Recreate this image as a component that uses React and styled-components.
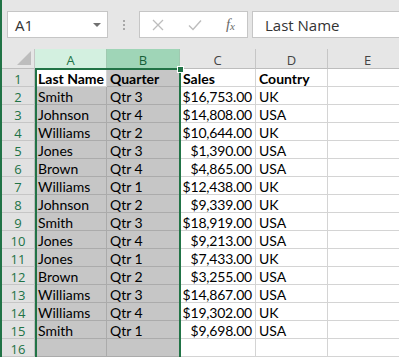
import styled, { createGlobalStyle } from "styled-components";

const rows = [
  ["Last Name", "Quarter", "Sales", "Country"],
  ["Smith", "Qtr 3", "$16,753.00", "UK"],
  ["Johnson", "Qtr 4", "$14,808.00", "USA"],
  ["Williams", "Qtr 2", "$10,644.00", "UK"],
  ["Jones", "Qtr 3", "$1,390.00", "USA"],
  ["Brown", "Qtr 4", "$4,865.00", "USA"],
  ["Williams", "Qtr 1", "$12,438.00", "UK"],
  ["Johnson", "Qtr 2", "$9,339.00", "UK"],
  ["Smith", "Qtr 3", "$18,919.00", "USA"],
  ["Jones", "Qtr 4", "$9,213.00", "USA"],
  ["Jones", "Qtr 1", "$7,433.00", "UK"],
  ["Brown", "Qtr 2", "$3,255.00", "USA"],
  ["Williams", "Qtr 3", "$14,867.00", "USA"],
  ["Williams", "Qtr 4", "$19,302.00", "UK"],
  ["Smith", "Qtr 1", "$9,698.00", "USA"],
  ["", "", "", ""],
];

const columns = [
  { name: "A", tone: "light" },
  { name: "B", tone: "dark" },
  { name: "C" },
  { name: "D" },
  { name: "E" },
];

export default function App() {
  return (
    <>
      <GlobalStyle />
      <Window>
        <Toolbar>
          <NameBox>
            A1
            <Caret />
          </NameBox>
          <Dots>
            <span />
            <span />
            <span />
          </Dots>
          <ActionBox>
            <svg width="12" height="12" viewBox="0 0 12 12">
              <path d="M1 1L11 11M11 1L1 11" stroke="#bdbdbd" strokeWidth="1.3" />
            </svg>
            <svg width="14" height="12" viewBox="0 0 14 12">
              <path d="M1 6.5L5 10.5L13 1.5" stroke="#bdbdbd" strokeWidth="1.4" fill="none" />
            </svg>
            <Fx>
              f<sub>x</sub>
            </Fx>
          </ActionBox>
          <FormulaBox>Last Name</FormulaBox>
        </Toolbar>
        <Sheet>
          <Corner>
            <svg width="14" height="14" viewBox="0 0 14 14">
              <path d="M14 0L14 14L0 14Z" fill="#bdbdbd" />
            </svg>
          </Corner>
          {columns.map((c) => (
            <ColHeader key={c.name} $tone={c.tone}>
              {c.name}
            </ColHeader>
          ))}
          {rows.map((r, i) => (
            <Row key={i} r={r} i={i} />
          ))}
          <Selection>
            <Handle />
          </Selection>
        </Sheet>
      </Window>
    </>
  );
}

function Row({ r, i }) {
  const bold = i === 0;
  return (
    <>
      <RowHeader>{i + 1}</RowHeader>
      <Cell $selected={i !== 0} $bold={bold}>{r[0]}</Cell>
      <Cell $selected $bold={bold}>{r[1]}</Cell>
      <Cell $bold={bold} $right={!bold}>{r[2]}</Cell>
      <Cell $bold={bold}>{r[3]}</Cell>
      <Cell />
    </>
  );
}

const GlobalStyle = createGlobalStyle`
  body {
    margin: 0;
    background: #fff;
    overflow: hidden;
  }
`;

const Window = styled.div`
  width: 399px;
  height: 357px;
  overflow: hidden;
  border-left: 2px solid #217346;
  box-sizing: border-box;
  display: flex;
  flex-direction: column;
  font-family: "Open Sans", sans-serif;
`;

const Toolbar = styled.div`
  height: 49px;
  flex: none;
  background: #e6e6e6;
  display: flex;
  align-items: center;
  padding-left: 5px;
  box-sizing: border-box;
`;

const NameBox = styled.div`
  width: 101px;
  height: 27px;
  box-sizing: border-box;
  background: #fff;
  border: 1px solid #c6c6c6;
  display: flex;
  align-items: center;
  justify-content: space-between;
  padding: 0 6px 0 7px;
  font-size: 15px;
  color: #333;
`;

const Caret = styled.span`
  width: 0;
  height: 0;
  border-left: 4px solid transparent;
  border-right: 4px solid transparent;
  border-top: 4px solid #707070;
`;

const Dots = styled.div`
  width: 31px;
  display: flex;
  flex-direction: column;
  align-items: center;
  gap: 2px;
  span {
    width: 2px;
    height: 2px;
    background: #a8a8a8;
  }
`;

const ActionBox = styled.div`
  width: 109px;
  height: 27px;
  box-sizing: border-box;
  background: #fff;
  border: 1px solid #c6c6c6;
  display: flex;
  align-items: center;
  justify-content: space-between;
  padding: 0 12px 0 12px;
`;

const Fx = styled.i`
  font-family: "Liberation Serif", serif;
  font-size: 15px;
  color: #6a6a6a;
  sub {
    font-size: 11px;
    vertical-align: -1px;
  }
`;

const FormulaBox = styled.div`
  flex: 1;
  margin-left: 4px;
  height: 27px;
  box-sizing: border-box;
  background: #fff;
  border: 1px solid #c6c6c6;
  border-right: none;
  display: flex;
  align-items: center;
  padding-left: 12px;
  font-size: 15px;
  color: #333;
`;

const Sheet = styled.div`
  position: relative;
  display: grid;
  grid-template-columns: 33px 72px 73px 76px 72px 80px;
  grid-template-rows: 20px;
  grid-auto-rows: 18px;
`;

const Corner = styled.div`
  background: #e6e6e6;
  border-right: 1px solid #c6c6c6;
  border-bottom: 1px solid #bdbdbd;
  display: flex;
  align-items: flex-end;
  justify-content: flex-end;
  padding: 0 3px 3px 0;
`;

const headerTones = {
  light: { bg: "#d3f0e0", fg: "#217346" },
  dark: { bg: "#9fd5b7", fg: "#175f37" },
};

const ColHeader = styled.div`
  background: ${(p) => (headerTones[p.$tone] || { bg: "#e6e6e6" }).bg};
  color: ${(p) => (headerTones[p.$tone] || { fg: "#444" }).fg};
  border-right: 1px solid ${(p) => (p.$tone ? "#9fc9b0" : "#c6c6c6")};
  border-bottom: 1px solid #bdbdbd;
  display: flex;
  align-items: center;
  justify-content: center;
  padding-top: 2px;
  font-size: 13px;
`;

const RowHeader = styled.div`
  background: #e1e1e1;
  color: #217346;
  border-right: 1px solid #bdbdbd;
  border-bottom: 1px solid #c6c6c6;
  display: flex;
  align-items: center;
  justify-content: center;
  padding-top: 2px;
  font-size: 13px;
`;

const Cell = styled.div`
  background: ${(p) => (p.$selected ? "#c6c6c6" : "#fff")};
  border-right: 1px solid ${(p) => (p.$selected ? "#ababab" : "#d4d4d4")};
  border-bottom: 1px solid ${(p) => (p.$selected ? "#ababab" : "#d4d4d4")};
  display: flex;
  align-items: flex-end;
  justify-content: ${(p) => (p.$right ? "flex-end" : "flex-start")};
  padding: 0 3px 0 3px;
  font-family: Lato, sans-serif;
  font-size: 14px;
  line-height: 14px;
  letter-spacing: ${(p) => (p.$right ? "-0.2px" : "0")};
  font-weight: ${(p) => (p.$bold ? 700 : 400)};
  color: #000;
  white-space: nowrap;
  overflow: hidden;
`;

const Selection = styled.div`
  position: absolute;
  left: 33px;
  top: 19px;
  width: 146px;
  height: 400px;
  border: 2px solid #217346;
  box-sizing: border-box;
  pointer-events: none;
`;

const Handle = styled.div`
  position: absolute;
  right: -5px;
  top: -4px;
  width: 5px;
  height: 5px;
  background: #217346;
  border: 1px solid #fff;
`;
